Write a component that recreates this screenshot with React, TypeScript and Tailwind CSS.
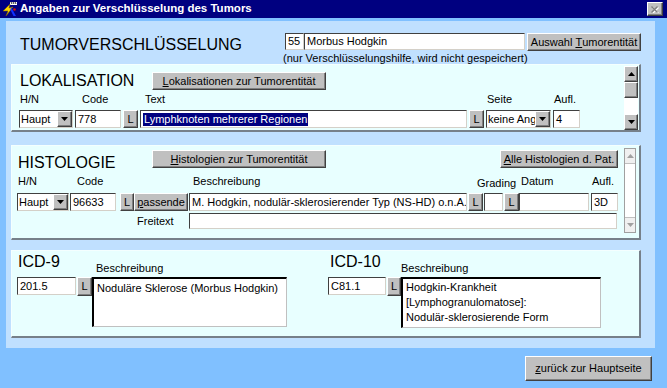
import React from "react";

const raised =
  "bg-[#c0c0c0] border border-t-white border-l-white border-r-[#404040] border-b-[#404040] shadow-[inset_-1px_-1px_0_#808080]";
const sunken =
  "bg-white border border-t-[#404040] border-l-[#404040] border-r-[#d4d0c8] border-b-[#d4d0c8]";

function Btn({ className = "", children }: { className?: string; children: React.ReactNode }) {
  return (
    <div className={`${raised} flex shrink-0 items-center justify-center whitespace-nowrap text-[11px] leading-none ${className}`}>
      {children}
    </div>
  );
}

function Field({ className = "", children }: { className?: string; children?: React.ReactNode }) {
  return (
    <div className={`${sunken} flex shrink-0 items-center overflow-hidden whitespace-nowrap px-[2px] text-[11px] leading-none ${className}`}>
      {children}
    </div>
  );
}

function Tri({ up = false, color = "#000" }: { up?: boolean; color?: string }) {
  return (
    <svg width="7" height="4" viewBox="0 0 7 4">
      <path d={up ? "M0 4 L3.5 0 L7 4 Z" : "M0 0 L7 0 L3.5 4 Z"} fill={color} />
    </svg>
  );
}

function Select({ className = "", text }: { className?: string; text: string }) {
  return (
    <div className={`${sunken} flex shrink-0 items-stretch ${className}`}>
      <div className="flex flex-1 items-center overflow-hidden whitespace-nowrap pl-[1px] text-[11px] leading-none">
        {text}
      </div>
      <div className={`${raised} flex w-[15px] items-center justify-center`}>
        <Tri />
      </div>
    </div>
  );
}

function LBtn({ className = "" }: { className?: string }) {
  return <Btn className={`h-[18px] ${className}`}>L</Btn>;
}

function Panel({ className = "", children }: { className?: string; children: React.ReactNode }) {
  return (
    <div
      className={`ml-[5px] flex w-[630px] shrink-0 border-t border-l border-b-2 border-r-2 border-t-[#f4ffff] border-l-[#f4ffff] border-b-[#76808a] border-r-[#76808a] bg-[#e8ffff] ${className}`}
    >
      {children}
    </div>
  );
}

function TitleIcon() {
  return (
    <svg width="16" height="16" viewBox="0 0 16 16" className="ml-[2px] shrink-0">
      <rect x="8" y="1" width="7" height="3" fill="#ffffff" />
      <path d="M9 1 L10 3 M11 1 L12 3 M13 1 L14 3" stroke="#000" strokeWidth="0.8" />
      <path d="M1 10 L8 3 L7 7 L11 6 L4 15 L6 10 Z" fill="#ffd800" stroke="#7a5a00" strokeWidth="0.6" />
      <path d="M9 6 L14 15 L11.5 15 L8.5 9 Z" fill="#1030ff" />
      <circle cx="12.5" cy="8.5" r="1.3" fill="#d01010" />
    </svg>
  );
}

export default function App() {
  return (
    <div className="h-[388px] w-[667px] overflow-hidden bg-[#80c0ff] font-['Liberation_Sans',Arial,sans-serif] text-black">
      {/* title bar */}
      <div className="flex h-[18px] items-center bg-[#000080]">
        <TitleIcon />
        <span className="ml-[2px] text-[11.5px] font-bold leading-none text-white">
          Angaben zur Verschlüsselung des Tumors
        </span>
        <div className={`${raised} ml-auto mr-[4px] flex h-[14px] w-[16px] items-center justify-center`}>
          <svg width="8" height="7" viewBox="0 0 8 7">
            <path d="M1.5 1.5 L7.5 7.5 M7.5 1.5 L1.5 7.5" stroke="#ffffff" strokeWidth="1.4" />
            <path d="M0.5 0.5 L6.5 6.5 M6.5 0.5 L0.5 6.5" stroke="#808080" strokeWidth="1.4" />
          </svg>
        </div>
      </div>

      <div className="ml-[6px] mt-[3px] flex h-[327px] w-[649px] flex-col bg-[#c0e0ff]">
        {/* header */}
        <div className="flex h-[43px] shrink-0">
          <div className="w-[279px] pl-[14px] pt-[15px] text-[16px] leading-[18px]">TUMORVERSCHLÜSSELUNG</div>
          <div className="pt-[12px]">
            <div className="flex items-start">
              <Field className="h-[17px] w-[19px]">55</Field>
              <Field className="h-[17px] w-[221px]">Morbus Hodgkin</Field>
              <Btn className="ml-[2px] h-[18px] w-[114px]">
                Auswahl&nbsp;<span className="underline">T</span>umorentität
              </Btn>
            </div>
            <div className="-ml-[2px] mt-[1px] whitespace-nowrap text-[11px] leading-[12px]">
              (nur Verschlüsselungshilfe, wird nicht gespeichert)
            </div>
          </div>
        </div>

        {/* Lokalisation */}
        <Panel className="h-[68px]">
          <div className="flex flex-1 flex-col">
            <div className="mt-[7px] flex h-[18px] items-center">
              <div className="w-[140px] pl-[8px] text-[16px] leading-[18px]">LOKALISATION</div>
              <Btn className="h-[18px] w-[174px]">
                <span className="underline">L</span>okalisationen zur Tumorentität
              </Btn>
            </div>
            <div className="mt-[3px] flex h-[13px] pl-[8px] text-[11px] leading-[13px]">
              <span className="w-[62px]">H/N</span>
              <span className="w-[63px]">Code</span>
              <span className="w-[342px]">Text</span>
              <span className="w-[67px]">Seite</span>
              <span>Aufl.</span>
            </div>
            <div className="mt-[4px] flex pl-[7px]">
              <Select className="h-[18px] w-[54px]" text="Haupt" />
              <Field className="ml-[2px] h-[18px] w-[46px]">778</Field>
              <LBtn className="ml-[2px] w-[15px]" />
              <Field className="ml-[2px] h-[18px] w-[327px]">
                <span className="bg-[#000080] px-[1px] leading-[13px] text-white">Lymphknoten mehrerer Regionen</span>
              </Field>
              <LBtn className="ml-[2px] w-[15px]" />
              <Select className="ml-[2px] h-[18px] w-[65px]" text="keine Angabe" />
              <Field className="ml-[2px] h-[18px] w-[27px]">4</Field>
            </div>
          </div>
          <div className="mr-[1px] mt-[1px] flex h-[64px] w-[14px] flex-col">
            <div className={`${raised} flex h-[16px] items-center justify-center`}>
              <Tri up />
            </div>
            <div className={`${raised} h-[16px]`} />
            <div className="flex-1 bg-white" />
            <div className={`${raised} flex h-[16px] items-center justify-center`}>
              <Tri />
            </div>
          </div>
        </Panel>

        {/* Histologie */}
        <Panel className="mt-[13px] h-[95px]">
          <div className="flex flex-1 flex-col">
            <div className="mt-[4px] flex h-[18px] items-start">
              <div className="h-[18px] w-[140px] pl-[6px] pt-[4px] text-[16px] leading-[18px]">HISTOLOGIE</div>
              <Btn className="h-[18px] w-[174px]">
                <span className="underline">H</span>istologien zur Tumorentität
              </Btn>
              <Btn className="ml-[174px] h-[18px] w-[118px]">
                <span className="underline">A</span>lle Histologien d. Pat.
              </Btn>
            </div>
            <div className="mt-[7px] flex h-[13px] pl-[6px] text-[11px] leading-[13px]">
              <span className="w-[59px]">H/N</span>
              <span className="w-[116px]">Code</span>
              <span className="w-[284px]">Beschreibung</span>
              <span className="w-[44px] pt-[2px]">Grading</span>
              <span className="w-[71px]">Datum</span>
              <span>Aufl.</span>
            </div>
            <div className="mt-[5px] flex pl-[5px]">
              <Select className="h-[18px] w-[52px]" text="Haupt" />
              <Field className="ml-[1px] h-[18px] w-[46px]">96633</Field>
              <LBtn className="ml-[4px] w-[14px]" />
              <Btn className="h-[18px] w-[54px]">
                <span className="underline">p</span>assende
              </Btn>
              <Field className="ml-[1px] h-[18px] w-[278px]">M. Hodgkin, nodulär-sklerosierender Typ (NS-HD) o.n.A.</Field>
              <LBtn className="ml-[1px] w-[15px]" />
              <Field className="ml-[1px] h-[18px] w-[19px]" />
              <LBtn className="ml-[1px] w-[15px]" />
              <Field className="h-[18px] w-[70px]" />
              <Field className="ml-[2px] h-[18px] w-[27px]">3D</Field>
            </div>
            <div className="mt-[2px] flex items-center pl-[125px]">
              <span className="w-[52px] text-[11px] leading-[13px]">Freitext</span>
              <Field className="h-[16px] w-[428px]" />
            </div>
          </div>
          <div className="mr-[3px] mt-[2px] flex h-[85px] w-[12px] flex-col border border-[#a0a0a0] bg-white">
            <div className="flex h-[15px] items-center justify-center border-b border-[#c0c0c0] bg-[#f0f0f0]">
              <Tri up color="#a0a0a0" />
            </div>
            <div className="flex-1" />
            <div className="flex h-[15px] items-center justify-center border-t border-[#c0c0c0] bg-[#f0f0f0]">
              <Tri color="#a0a0a0" />
            </div>
          </div>
        </Panel>

        {/* ICD */}
        <Panel className="mt-[10px] h-[88px]">
          <div className="flex pl-[5px]">
            <div className="flex flex-col">
              <div className="flex h-[26px]">
                <div className="w-[79px] pl-[1px] pt-[2px] text-[16px] leading-[18px]">ICD-9</div>
                <div className="pt-[11px] text-[11px] leading-[13px]">Beschreibung</div>
              </div>
              <div className="flex items-start">
                <Field className="h-[18px] w-[59px]">201.5</Field>
                <Btn className="ml-[1px] h-[19px] w-[15px]">L</Btn>
                <div className="h-[50px] w-[195px] border-t-2 border-l-2 border-b border-r border-t-black border-l-black border-b-[#c0c0c0] border-r-[#c0c0c0] bg-white px-[3px] pt-[2px] text-[11px] leading-[15px]">
                  Noduläre Sklerose (Morbus Hodgkin)
                </div>
              </div>
            </div>
            <div className="ml-[41px] flex flex-col">
              <div className="flex h-[26px]">
                <div className="w-[73px] pl-[2px] pt-[2px] text-[16px] leading-[18px]">ICD-10</div>
                <div className="pt-[11px] text-[11px] leading-[13px]">Beschreibung</div>
              </div>
              <div className="flex items-start">
                <Field className="h-[18px] w-[58px]">C81.1</Field>
                <Btn className="ml-[1px] h-[19px] w-[14px]">L</Btn>
                <div className="h-[51px] w-[200px] border-t-2 border-l-2 border-b border-r border-t-black border-l-black border-b-[#c0c0c0] border-r-[#c0c0c0] bg-white px-[3px] pt-[1px] text-[11px] leading-[15px]">
                  <div>Hodgkin-Krankheit</div>
                  <div>[Lymphogranulomatose]:</div>
                  <div>Nodulär-sklerosierende Form</div>
                </div>
              </div>
            </div>
          </div>
        </Panel>
      </div>

      <div className="mr-[15px] mt-[8px] flex justify-end">
        <Btn className="h-[25px] w-[127px]">
          <span className="underline">z</span>urück zur Hauptseite
        </Btn>
      </div>
    </div>
  );
}
